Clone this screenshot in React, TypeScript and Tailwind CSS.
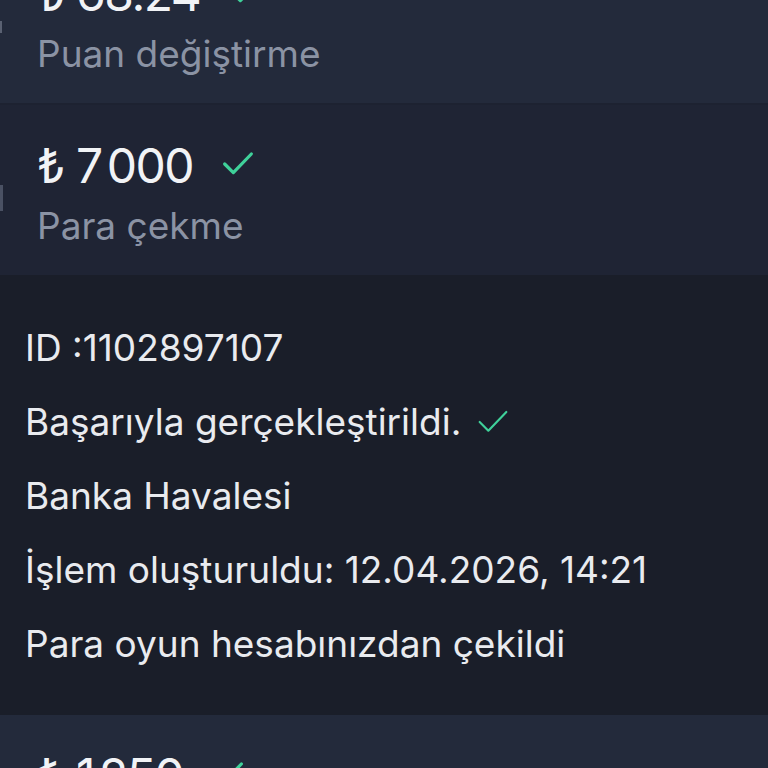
import { ReactNode } from 'react';

type Tx = {
  amount: string[];
  label: string;
};

function Check({ size = 32, stroke = 2.4 }: { size?: number; stroke?: number }) {
  return (
    <svg width={size} height={size} viewBox="0 0 24 24" fill="none" className="text-[#3fd19a] shrink-0">
      <polyline points="2,12 8.5,18.5 22,4.5" stroke="currentColor" strokeWidth={stroke} strokeLinecap="round" strokeLinejoin="round" />
    </svg>
  );
}

function TxCard({ tx, bg, children }: { tx: Tx; bg: string; children?: ReactNode }) {
  return (
    <div className={`relative h-[170px] px-[37px] pt-[37px] ${bg}`}>
      <div className="flex items-center">
        <span className="text-[48px] leading-[48px] text-[#f1f3f6] tracking-[-1.5px]">
          {tx.amount.map((g, i) => (
            <span key={i} className={i > 0 ? 'ml-[5px]' : ''}>
              {g}
            </span>
          ))}
        </span>
        <span className="ml-[29px] -mt-[4px]">
          <Check />
        </span>
      </div>
      <p className="mt-[14px] text-[37px] leading-[44px] text-[#8b93a4]">{tx.label}</p>
      {children}
    </div>
  );
}

const details = [
  'ID :1102897107',
  'Başarıyla gerçekleştirildi.',
  'Banka Havalesi',
  'İşlem oluşturuldu: 12.04.2026, 14:21',
  'Para oyun hesabınızdan çekildi',
];

export default function App() {
  return (
    <div className="w-[768px] h-[768px] overflow-hidden bg-[#1a1e29] font-['Inter',sans-serif]">
      <div className="-mt-[67px]">
        <TxCard tx={{ amount: ['₺ 68.24'], label: 'Puan değiştirme' }} bg="bg-[#232a3b]">
          <span className="absolute left-0 top-[88px] h-[12px] w-[2px] bg-[#5a6172]" />
        </TxCard>
        <div className="h-[2px] bg-[#1d2231]" />
        <TxCard tx={{ amount: ['₺ 7', '000'], label: 'Para çekme' }} bg="bg-[#1f2434]">
          <span className="absolute left-0 top-[80px] h-[26px] w-[3px] bg-[#4a5163]" />
        </TxCard>

        {/* expanded details */}
        <div className="h-[440px] px-[25px] pt-[53px] flex flex-col gap-[34px] bg-[#1a1e29]">
          {details.map((line, i) => (
            <div key={i} className="flex items-center text-[37px] leading-[40px] text-[#e9ebef]">
              <span>{line}</span>
              {i === 1 && (
                <span className="ml-[16px]">
                  <Check size={32} stroke={1.6} />
                </span>
              )}
            </div>
          ))}
        </div>

        <TxCard tx={{ amount: ['₺ 1', '250'], label: 'Para çekme' }} bg="bg-[#232a3b]" />
      </div>
    </div>
  );
}
